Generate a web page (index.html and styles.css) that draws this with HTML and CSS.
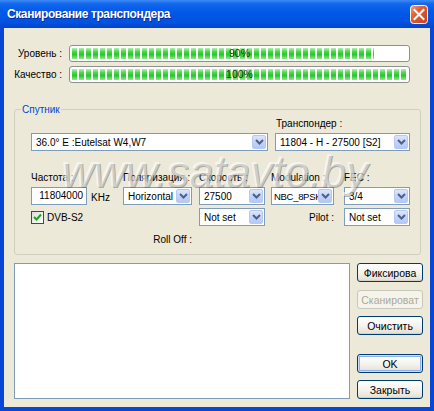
FILE: index.html
```html
<!DOCTYPE html>
<html lang="ru">
<head>
  <meta charset="UTF-8">
  <title>Сканирование транспондера</title>
  <link rel="stylesheet" href="styles.css">
</head>
<body>

<div class="window">
  <div class="titlebar">
    <span class="title">Сканирование транспондера</span>
    <button class="close" title="Закрыть">
      <svg width="18" height="19" viewBox="0 0 18 19">
        <defs>
          <linearGradient id="closeBg" x1="0" y1="0" x2="1" y2="1">
            <stop offset="0" stop-color="#F2A588"/>
            <stop offset="0.35" stop-color="#E2623A"/>
            <stop offset="1" stop-color="#C53C1A"/>
          </linearGradient>
        </defs>
        <rect x="0.5" y="0.5" width="17" height="18" rx="3" fill="url(#closeBg)" stroke="#fff"/>
        <path d="M4.5 5l9 9M13.5 5l-9 9" stroke="#fff" stroke-width="2" stroke-linecap="square"/>
      </svg>
    </button>
  </div>

  <div class="client">
    <!-- signal meters -->
    <div class="meters">
      <span class="meter-label">Уровень :</span>
      <div class="meter">
        <div class="meter-fill" style="width:90%"></div>
        <span class="meter-text">90%</span>
      </div>
      <span class="meter-label">Качество :</span>
      <div class="meter">
        <div class="meter-fill" style="width:100%"></div>
        <span class="meter-text">100%</span>
      </div>
    </div>

    <fieldset class="group">
      <legend>Спутник</legend>

      <div class="row row-head">
        <span class="tp-label">Транспондер :</span>
      </div>
      <div class="row row-ctrl">
        <div class="combo w-sat">
          <span class="combo-text">36.0° E :Eutelsat W4,W7</span>
          <span class="combo-btn"><svg width="9" height="6" viewBox="0 0 9 6"><path d="M1 1l3.5 3.5L8 1"/></svg></span>
        </div>
        <div class="combo w-tp">
          <span class="combo-text">11804 - H - 27500 [S2]</span>
          <span class="combo-btn"><svg width="9" height="6" viewBox="0 0 9 6"><path d="M1 1l3.5 3.5L8 1"/></svg></span>
        </div>
      </div>

      <div class="row row-head row-gap">
        <span>Частота :</span>
        <span>Поляризация :</span>
        <span>Скорость :</span>
        <span>Modulation :</span>
        <span>FEC :</span>
      </div>
      <div class="row row-ctrl">
        <div class="freq">
          <span class="edit">11804000</span>
          <span class="unit">KHz</span>
        </div>
        <div class="combo w-pol">
          <span class="combo-text">Horizontal</span>
          <span class="combo-btn"><svg width="9" height="6" viewBox="0 0 9 6"><path d="M1 1l3.5 3.5L8 1"/></svg></span>
        </div>
        <div class="combo w-66">
          <span class="combo-text">27500</span>
          <span class="combo-btn"><svg width="9" height="6" viewBox="0 0 9 6"><path d="M1 1l3.5 3.5L8 1"/></svg></span>
        </div>
        <div class="combo w-mod">
          <span class="combo-text tight">NBC_8PSK</span>
          <span class="combo-btn"><svg width="9" height="6" viewBox="0 0 9 6"><path d="M1 1l3.5 3.5L8 1"/></svg></span>
        </div>
        <div class="combo w-66">
          <span class="combo-text">3/4</span>
          <span class="combo-btn"><svg width="9" height="6" viewBox="0 0 9 6"><path d="M1 1l3.5 3.5L8 1"/></svg></span>
        </div>
      </div>

      <div class="row row-ctrl">
        <label class="check">
          <span class="check-box"><svg width="9" height="9" viewBox="0 0 9 9"><path d="M1 4l2.5 2.5L8 1.5"/></svg></span>
          DVB-S2
        </label>
        <div class="combo w-66 col3">
          <span class="combo-text">Not set</span>
          <span class="combo-btn"><svg width="9" height="6" viewBox="0 0 9 6"><path d="M1 1l3.5 3.5L8 1"/></svg></span>
        </div>
        <span class="side-label w-mod">Pilot :</span>
        <div class="combo w-66">
          <span class="combo-text">Not set</span>
          <span class="combo-btn"><svg width="9" height="6" viewBox="0 0 9 6"><path d="M1 1l3.5 3.5L8 1"/></svg></span>
        </div>
      </div>

      <div class="row row-head row-last">
        <span class="side-label w-pol col2">Roll Off :</span>
      </div>
    </fieldset>

    <div class="bottom">
      <div class="listbox"></div>
      <div class="buttons">
        <button class="btn">Фиксирова</button>
        <button class="btn" disabled>Сканироват</button>
        <button class="btn">Очистить</button>
        <button class="btn btn-default">OK</button>
        <button class="btn">Закрыть</button>
      </div>
    </div>
  </div>

  <div class="watermark">www.satavto.by</div>
</div>

</body>
</html>
```

FILE: styles.css
```css
* {box-sizing:border-box}
body {
  margin:0;
  background:#fff;
  font-family:"Liberation Sans", Arial, sans-serif;
  font-size:10px;
  color:#000;
}

/* window frame */
.window {
  position:relative;
  width:434px;
  height:411px;
  display:flex;
  flex-direction:column;
  background:#0846D8;
  overflow:hidden;
}
.titlebar {
  height:28px;
  display:flex;
  align-items:center;
  padding:0 6px 0 7px;
  background:linear-gradient(to bottom, #3D8BF7 0%, #1166EC 14%, #0258E6 45%, #0052DF 80%, #0544C8 100%);
}
.title {
  flex:1;
  color:#fff;
  font-weight:bold;
  font-size:12px;
  letter-spacing:-0.4px;
  text-shadow:1px 1px 0 #0B2A95;
}
.close {
  width:18px;height:19px;padding:0;border:none;background:none;display:block;
}
.close svg {display:block}

.client {
  flex:1;
  margin:0 4px 4px;
  background:#ECE9D8;
  padding:17px 0 8px 10px;
  display:flex;
  flex-direction:column;
}

/* signal meters */
.meters {
  display:grid;
  grid-template-columns:55px 341px;
  row-gap:4px;
}
.meter-label {
  text-align:right;
  padding-right:7px;
  line-height:17px;
}
.meter {
  position:relative;
  height:17px;
  border:1px solid #8E9090;
  border-radius:3px;
  background:#fff;
  padding:2px;
}
.meter-fill {
  height:100%;
  background:
    repeating-linear-gradient(to right, transparent 0 5px, #fff 5px 7px),
    linear-gradient(to bottom, #B2F2B2 0%, #46D646 35%, #28C828 60%, #8EE88E 100%);
}
.meter-text {
  position:absolute;
  left:0;right:0;top:0;
  text-align:center;
  line-height:15px;
  font-size:10.5px;
  color:#123a12;
}

/* satellite group */
.group {
  margin:20px 0 0;
  width:407px;
  min-width:0;
  border:1px solid #D0D0BF;
  border-radius:3px;
  padding:1px 0 8px 6px;
}
.group legend {
  padding:0 1px;
  color:#0046D5;
  line-height:13px;
}
.row {
  display:grid;
  grid-template-columns:92px 76px 72px 73px 66px;
  margin-left:10px;
  align-items:center;
}
.row-head {height:13px;line-height:13px}
.row-ctrl {height:18px;margin-top:3px}
.row-gap {margin-top:20px}
.row-last {margin-top:7px}
.tp-label {grid-column:4 / 6;padding-left:5px}
.col2 {grid-column:2}
.col3 {grid-column:3}
.side-label {text-align:right}

.combo {
  display:flex;
  align-items:center;
  height:18px;
  border:1px solid #7F9DB9;
  background:#fff;
  padding:1px;
}
.combo-text {
  flex:1;
  min-width:0;
  overflow:hidden;
  white-space:nowrap;
  padding-left:3px;
}
.combo-text.tight {padding-left:1px;font-size:9.5px;letter-spacing:-0.3px}
.combo-btn {
  width:14px;
  height:14px;
  flex:none;
  display:flex;
  align-items:center;
  justify-content:center;
  border:1px solid #B7C9F2;
  border-radius:2px;
  background:linear-gradient(to bottom, #DCE6FC, #C3D4FA 50%, #B4C8F6);
}
.combo-btn svg {display:block}
.combo-btn path {fill:none;stroke:#4D6185;stroke-width:2}
.w-sat {grid-column:1 / 4;width:237px}
.w-tp {grid-column:4 / 6;width:135px;margin-left:4px}
.w-pol {width:69px}
.w-66 {width:66px}
.w-mod {width:63px}

.freq {display:flex;align-items:flex-end;gap:4px}
.edit {
  width:56px;
  height:18px;
  border:1px solid #7F9DB9;
  background:#fff;
  text-align:right;
  padding-right:3px;
  line-height:16px;
}
.unit {line-height:14px}

.check {
  grid-column:1 / 3;
  display:flex;
  align-items:center;
  gap:3px;
}
.check-box {
  width:13px;height:13px;
  border:1px solid #1C5180;
  background:linear-gradient(135deg, #DCDCD7, #fff);
  display:flex;align-items:center;justify-content:center;
}
.check-box svg {display:block}
.check-box path {fill:none;stroke:#21A121;stroke-width:2}

/* log and buttons */
.bottom {
  flex:1;
  display:flex;
  gap:7px;
  margin-top:8px;
}
.listbox {
  width:336px;
  border:1px solid #7F9DB9;
  background:#fff;
}
.buttons {
  width:66px;
  display:flex;
  flex-direction:column;
  gap:7px;
}
.btn {
  height:19px;
  padding:0;
  border:1px solid #003C74;
  border-radius:3px;
  background:linear-gradient(to bottom, #FFFFFF, #F3F2EC 55%, #E2DFD3);
  box-shadow:inset 0 -1px 0 #D6D0C5;
  font-family:"Liberation Sans", Arial, sans-serif;
  font-size:10.5px;
  color:#000;
  white-space:nowrap;
  overflow:hidden;
}
.btn:first-child {margin-bottom:1px}
.btn:disabled {
  border-color:#C9C7BA;
  color:#ACA899;
  background:#F5F4EA;
  box-shadow:none;
}
.btn-default {
  margin-top:12px;
  box-shadow:inset 0 0 0 1px #CEE0FA, inset 0 0 0 2px #8FB0E8;
}

/* site stamp over the dialog */
.watermark {
  position:absolute;
  left:62px;
  top:150px;
  font-size:44px;
  line-height:1;
  font-style:italic;
  color:rgba(245,245,245,0.45);
  text-shadow:1px 1px 0 rgba(90,90,90,0.45), -1px -1px 0 rgba(255,255,255,0.55);
  pointer-events:none;
  white-space:nowrap;
}
```
